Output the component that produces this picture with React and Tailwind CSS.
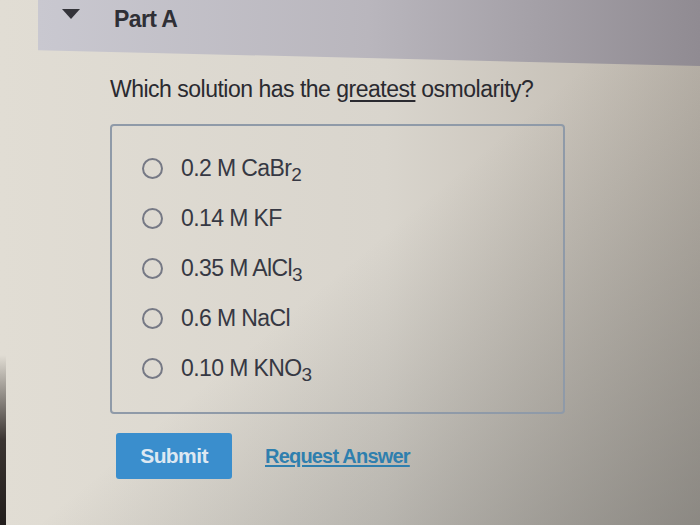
import React, { useState } from "react";

const options = [
  { id: "a", amount: "0.2 M", formula: "CaBr", sub: "2" },
  { id: "b", amount: "0.14 M", formula: "KF", sub: "" },
  { id: "c", amount: "0.35 M", formula: "AlCl", sub: "3" },
  { id: "d", amount: "0.6 M", formula: "NaCl", sub: "" },
  { id: "e", amount: "0.10 M", formula: "KNO", sub: "3" },
];

export default function App() {
  const [picked, setPicked] = useState(null);

  return (
    <div
      className="relative h-[525px] w-[700px] overflow-hidden bg-[linear-gradient(140deg,transparent_50%,rgba(100,100,98,0.55)),linear-gradient(90deg,#e1ddd4,#d9d5cd_55%,#bcb5ab)] text-[#2a2a2e]"
      style={{ fontFamily: '"Liberation Sans", Arial, sans-serif' }}
    >
      {/* Part header, bottom edge runs slightly downhill */}
      <header className="ml-[38px] flex h-[66px] items-start gap-[34px] bg-gradient-to-r from-[#c9c8d0] via-[#b9b6bd] to-[#908b92] pl-[24px] pt-[2px] [clip-path:polygon(0_0,100%_0,100%_100%,0_76%)]">
        <span className="mt-[7px] h-0 w-0 border-x-[9px] border-t-[10px] border-x-transparent border-t-[#34343a]" />
        <h2 className="text-[23px] font-bold tracking-[-0.6px] text-[#2f2f35]">Part A</h2>
      </header>

      <main className="mt-[6px] pl-[110px]">
        <p className="text-[23px] tracking-[-0.5px] text-[#2a2a30]">
          Which solution has the <span className="underline underline-offset-[3px]">greatest</span> osmolarity?
        </p>

        {/* Answer choices */}
        <div className="mt-[17px] w-[455px] rounded-[4px] border-2 border-[#8f9aa8] pb-[29px] pl-[30px] pt-[29px]">
          <ul className="flex flex-col gap-[22px]">
            {options.map((o) => (
              <li
                key={o.id}
                className="flex h-[28px] cursor-pointer items-center gap-[18px]"
                onClick={() => setPicked(o.id)}
              >
                <span className="flex h-[21px] w-[21px] items-center justify-center rounded-full border-2 border-[#767985]">
                  {picked === o.id && <span className="h-[9px] w-[9px] rounded-full bg-[#3a8fcc]" />}
                </span>
                <span className="text-[23px] tracking-[-0.6px] text-[#363843]">
                  {o.amount} {o.formula}
                  {o.sub && <sub className="text-[19px]">{o.sub}</sub>}
                </span>
              </li>
            ))}
          </ul>
        </div>

        <div className="mt-[19px] flex items-center gap-[33px] pl-[6px]">
          <button className="h-[46px] w-[116px] rounded-[3px] bg-[#3a8ecd] text-[21px] font-bold tracking-[-0.6px] text-[#dde8f2]">
            Submit
          </button>
          <a
            href="#"
            className="text-[20px] font-bold tracking-[-0.8px] text-[#2f7fae] underline underline-offset-[2px]"
          >
            Request Answer
          </a>
        </div>
      </main>

      <div className="absolute bottom-0 left-0 h-[170px] w-[6px] bg-gradient-to-b from-transparent via-[#3a3431] to-[#221e1c]" />
    </div>
  );
}
